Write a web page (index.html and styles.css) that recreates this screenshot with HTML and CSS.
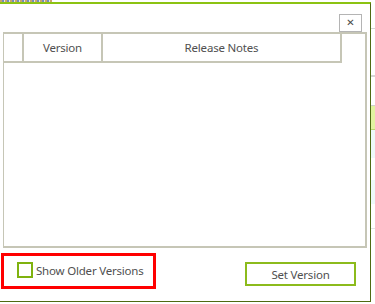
FILE: index.html
```html
<!DOCTYPE html>
<html lang="en">
<head>
    <meta charset="UTF-8">
    <meta name="viewport" content="width=device-width, initial-scale=1.0">
    <title>Versions</title>
    <link rel="stylesheet" href="styles.css">
</head>
<body>
    <div class="screen">
        <div class="topline"><span class="remnant"></span></div>
        <div class="main">
            <div class="dialog">
                <div class="titlebar">
                    <button class="close" type="button">&#x2715;</button>
                </div>

                <div class="grid">
                    <div class="grid-head">
                        <div class="cell cell-select"></div>
                        <div class="cell cell-version">Version</div>
                        <div class="cell cell-notes">Release Notes</div>
                    </div>
                    <div class="grid-body"></div>
                </div>

                <div class="footer">
                    <label class="older">
                        <span class="check"></span>
                        <span>Show Older Versions</span>
                    </label>
                    <button class="set-version" type="button">Set Version</button>
                </div>
            </div>

            <!-- page behind the dialog -->
            <div class="backdrop">
                <div class="bg-line first"></div>
                <div class="bg-line second"></div>
                <div class="bg-green"></div>
                <div class="bg-cyan"></div>
                <div class="bg-gap"></div>
                <div class="bg-cyan short"></div>
                <div class="bg-line third"></div>
            </div>
        </div>
    </div>
</body>
</html>
```

FILE: styles.css
```css
/* Reset */
* {
    margin: 0;
    padding: 0;
    box-sizing: border-box;
}

body {
    font-family: "Noto Sans", "Open Sans", sans-serif;
    font-size: 11.5px;
    letter-spacing: -0.2px;
    color: #505050;
    background-color: #ffffff;
}

.screen {
    width: 375px;
    height: 304px;
    overflow: hidden;
}

/* cut-off text of the page above */
.topline {
    height: 2px;
}

.remnant {
    display: block;
    width: 52px;
    height: 2px;
    background: repeating-linear-gradient(90deg, #c9a46a 0 2px, #6f8fb8 2px 4px, #e2e2e2 4px 5px);
}

.main {
    display: flex;
    height: 302px;
}

/* Dialog */
.dialog {
    width: 371px;
    height: 300px;
    flex-shrink: 0;
    border-top: 2px solid #8cc312;
    border-right: 1px solid #4f6a12;
    border-bottom: 1px solid #4f6a12;
    display: flex;
    flex-direction: column;
}

.titlebar {
    display: flex;
    justify-content: flex-end;
    padding: 10px 8px 0 0;
}

.close {
    width: 23px;
    height: 18px;
    border: 1px solid #b4b4b4;
    background-color: #ffffff;
    color: #4a4a4a;
    font-family: "DejaVu Sans", sans-serif;
    font-size: 10px;
    font-weight: bold;
    line-height: 16px;
}

.grid {
    margin-left: 3px;
    width: 364px;
    height: 216px;
    border-top: 2px solid #c6c6b6;
    border-left: 1px solid #c6c6b6;
    border-right: 2px solid #c6c6b6;
    border-bottom: 2px solid #c6c6b6;
}

.grid-head {
    display: flex;
    width: 338px;
    height: 29px;
    border-bottom: 2px solid #c6c6b6;
    border-right: 2px solid #c6c6b6;
}

.cell {
    display: flex;
    align-items: center;
    justify-content: center;
}

.cell-select {
    width: 20px;
    border-right: 2px solid #c6c6b6;
}

.cell-version {
    width: 79px;
    border-right: 2px solid #c6c6b6;
}

.cell-notes {
    flex: 1;
}

/* Footer */
.footer {
    display: flex;
    justify-content: space-between;
    align-items: flex-start;
    padding: 5px 14px 0 1px;
}

.older {
    display: flex;
    align-items: center;
    gap: 3px;
    width: 155px;
    height: 36px;
    padding: 0 0 2px 13px;
    border: 3px solid #ff0000;
}

.check {
    width: 16px;
    height: 16px;
    border: 2px solid #7fb20e;
}

.set-version {
    margin-top: 9px;
    width: 111px;
    height: 24px;
    border: 2px solid #8cbb1c;
    background-color: #ffffff;
    color: #505050;
    font-family: inherit;
    font-size: 11.5px;
    letter-spacing: -0.2px;
}

/* Background page strip */
.backdrop {
    width: 4px;
    display: flex;
    flex-direction: column;
}

.bg-line {
    height: 1px;
    background-color: #d6d6d6;
}

.bg-line.first {
    margin-top: 26px;
}

.bg-line.second {
    margin-top: 46px;
    height: 2px;
}

.bg-green {
    margin-top: 28px;
    height: 25px;
    background-color: #e2f3a0;
    border-top: 1px solid #cfcfcf;
    border-bottom: 1px solid #b9d870;
}

.bg-cyan {
    height: 28px;
    background-color: #eefafa;
}

.bg-gap {
    height: 22px;
}

.bg-cyan.short {
    height: 24px;
}

.bg-line.third {
    margin-top: 24px;
    background-color: #e4e4e4;
}
```
